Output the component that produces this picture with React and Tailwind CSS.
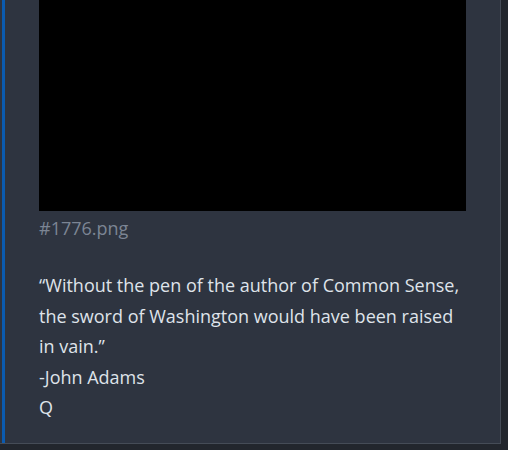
export default function App() {
  return (
    <div className="h-[450px] w-[508px] overflow-hidden bg-[#22262d] font-['Open_Sans',sans-serif]">
      <div className="flex h-[444px] w-[501px] border-r border-b border-[#454c57] bg-[#2e3440]">
        <div className="ml-[2px] w-[3px] shrink-0 bg-[#0b5bb0]" />
        <div className="flex-1 pl-[34px] pr-[34px]">
          <div className="h-[211px] w-[427px] bg-black" />
          <div className="mt-[4px] text-[18px] leading-[26px] text-[#7c8594]">#1776.png</div>
          <div className="mt-[29px] text-[18px] leading-[30.5px] text-[#dfe3ea]">
            <p>“Without the pen of the author of Common Sense, the sword of Washington would have been raised in vain.”</p>
            <p>-John Adams</p>
            <p>Q</p>
          </div>
        </div>
      </div>
    </div>
  );
}
